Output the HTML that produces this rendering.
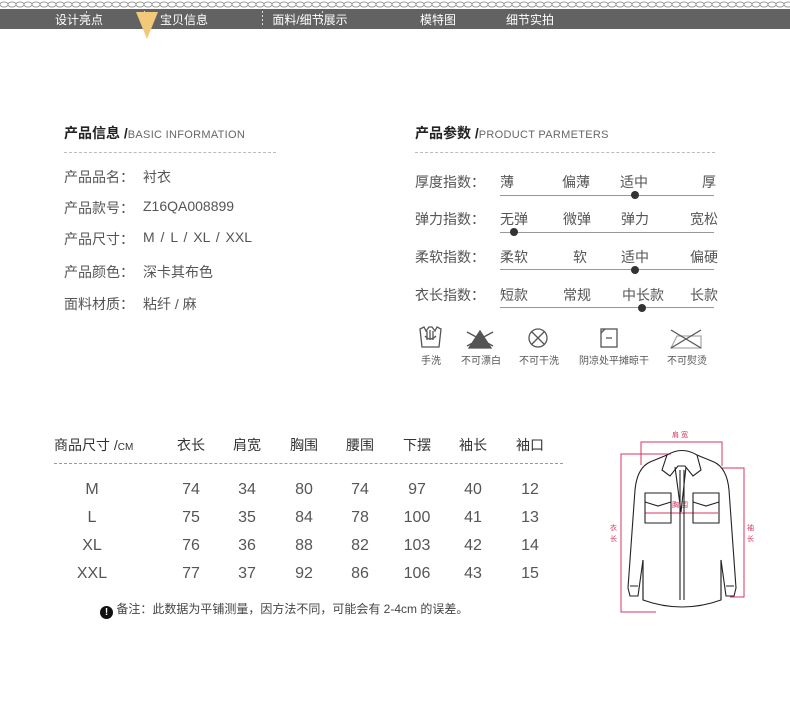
<!DOCTYPE html>
<html><head><meta charset="utf-8"><style>
*{margin:0;padding:0;box-sizing:border-box}
body{width:790px;height:709px;background:#fff;position:relative;overflow:hidden;font-family:"Liberation Sans","Noto Sans CJK SC",sans-serif;color:#555}
.a{position:absolute;white-space:nowrap}
.nav{position:absolute;left:0;top:9px;width:790px;height:20px;background:#626262}
.nav span{position:absolute;top:2px;font-size:12px;color:#fff;transform:translateX(-50%)}
.sep{position:absolute;top:11px;width:1px;height:16px;background:repeating-linear-gradient(#ddd 0 2px,transparent 2px 4px)}
.t{font-size:14px;font-weight:bold;color:#222}
.t small{font-weight:normal;font-size:11px;color:#666;letter-spacing:.3px}
.dash{position:absolute;height:0;border-top:1px dashed #bbb}
.r{font-size:14px;color:#555}
.ln{position:absolute;height:1px;background:#999}
.dot{position:absolute;width:8px;height:8px;border-radius:50%;background:#333}
.c{position:absolute;transform:translateX(-50%);white-space:nowrap}
.ic{font-size:10px;color:#555}
.th{font-size:14px;color:#333}
.td{font-size:16px;color:#555}
</style></head><body>
<svg class="a" style="left:0;top:0" width="790" height="9"><defs><pattern id="ch" width="8" height="9" patternUnits="userSpaceOnUse"><ellipse cx="4" cy="4.5" rx="4" ry="2.5" fill="none" stroke="#999" stroke-width="1"/></pattern></defs><rect width="790" height="9" fill="url(#ch)"/></svg>
<div class="nav">
<span style="left:79px">设计亮点</span>
<span style="left:184px">宝贝信息</span>
<span style="left:310px">面料/细节展示</span>
<span style="left:438px">模特图</span>
<span style="left:530px">细节实拍</span>
</div>
<div class="sep" style="left:86px"></div><div class="sep" style="left:144px"></div><div class="sep" style="left:262px"></div><div class="sep" style="left:322px"></div>
<svg class="a" style="left:136px;top:12px" width="22" height="28"><polygon points="0,0 22,0 11,27" fill="#f2c87a"/></svg>

<div class="a t" style="left:64px;top:123px">产品信息 /<small>BASIC INFORMATION</small></div>
<div class="dash" style="left:64px;top:152px;width:212px"></div>
<div class="a r" style="left:64px;top:167px">产品品名：</div><div class="a r" style="left:143px;top:167px">衬衣</div>
<div class="a r" style="left:64px;top:198px">产品款号：</div><div class="a r" style="left:143px;top:198px">Z16QA008899</div>
<div class="a r" style="left:64px;top:229px">产品尺寸：</div><div class="a r" style="left:143px;top:229px;word-spacing:2px">M / L / XL / XXL</div>
<div class="a r" style="left:64px;top:262px">产品颜色：</div><div class="a r" style="left:143px;top:262px">深卡其布色</div>
<div class="a r" style="left:64px;top:294px">面料材质：</div><div class="a r" style="left:143px;top:294px">粘纤 / 麻</div>

<div class="a t" style="left:415px;top:123px">产品参数 /<small>PRODUCT PARMETERS</small></div>
<div class="dash" style="left:415px;top:152px;width:300px"></div>

<div class="a r" style="left:415px;top:172px">厚度指数：</div>
<div class="a r" style="left:500px;top:172px">薄</div><div class="a r" style="left:562px;top:172px">偏薄</div><div class="a r" style="left:620px;top:172px">适中</div><div class="a r" style="left:702px;top:172px">厚</div>
<div class="ln" style="left:500px;top:195px;width:214px"></div><div class="dot" style="left:631px;top:191px"></div>

<div class="a r" style="left:415px;top:209px">弹力指数：</div>
<div class="a r" style="left:500px;top:209px">无弹</div><div class="a r" style="left:563px;top:209px">微弹</div><div class="a r" style="left:621px;top:209px">弹力</div><div class="a r" style="left:690px;top:209px">宽松</div>
<div class="ln" style="left:500px;top:232px;width:214px"></div><div class="dot" style="left:510px;top:228px"></div>

<div class="a r" style="left:415px;top:247px">柔软指数：</div>
<div class="a r" style="left:500px;top:247px">柔软</div><div class="a r" style="left:573px;top:247px">软</div><div class="a r" style="left:621px;top:247px">适中</div><div class="a r" style="left:690px;top:247px">偏硬</div>
<div class="ln" style="left:500px;top:269px;width:214px"></div><div class="dot" style="left:631px;top:266px"></div>

<div class="a r" style="left:415px;top:285px">衣长指数：</div>
<div class="a r" style="left:500px;top:285px">短款</div><div class="a r" style="left:563px;top:285px">常规</div><div class="a r" style="left:622px;top:285px">中长款</div><div class="a r" style="left:690px;top:285px">长款</div>
<div class="ln" style="left:500px;top:307px;width:214px"></div><div class="dot" style="left:638px;top:304px"></div>

<svg class="a" style="left:405px;top:322px" width="320" height="30" fill="none" stroke="#555" stroke-width="1.3">
<path d="M15 7 L19 5 L21 9 L24 5 L27 5 L30 9 L32 5 L36 7 L34 25 L17 25 Z"/><path d="M22 9 L22 18 M25 8 L25 18 M28 9 L28 18 M20 14 Q25 20 31 14"/>
<path d="M64 26 L75 9 L86 26 Z" fill="#555"/><path d="M62 10 L88 24 M62 24 L88 10"/>
<circle cx="133" cy="16" r="9"/><path d="M127 10 L139 22 M139 10 L127 22"/>
<rect x="196" y="7" width="16" height="18"/><path d="M196 11 L200 7 M201 16 L207 16"/>
<path d="M266 26 L272 14 L296 14 L296 26 Z" stroke="#aaa"/><path d="M266 8 L296 26 M266 26 L296 8"/>
</svg>
<div class="c ic" style="left:431px;top:352px">手洗</div>
<div class="c ic" style="left:481px;top:352px">不可漂白</div>
<div class="c ic" style="left:539px;top:352px">不可干洗</div>
<div class="c ic" style="left:614px;top:352px">阴凉处平摊晾干</div>
<div class="c ic" style="left:687px;top:352px">不可熨烫</div>

<div class="a th" style="left:54px;top:435px">商品尺寸 /<span style="font-size:10px">CM</span></div>
<div class="c th" style="left:191px;top:435px">衣长</div><div class="c th" style="left:247px;top:435px">肩宽</div><div class="c th" style="left:304px;top:435px">胸围</div><div class="c th" style="left:360px;top:435px">腰围</div><div class="c th" style="left:417px;top:435px">下摆</div><div class="c th" style="left:473px;top:435px">袖长</div><div class="c th" style="left:530px;top:435px">袖口</div>
<div class="dash" style="left:54px;top:463px;width:509px;border-color:#999"></div>

<div class="td">
<div class="c" style="left:92px;top:481px">M</div><div class="c" style="left:191px;top:481px">74</div><div class="c" style="left:247px;top:481px">34</div><div class="c" style="left:304px;top:481px">80</div><div class="c" style="left:360px;top:481px">74</div><div class="c" style="left:417px;top:481px">97</div><div class="c" style="left:473px;top:481px">40</div><div class="c" style="left:530px;top:481px">12</div>
<div class="c" style="left:92px;top:509px">L</div><div class="c" style="left:191px;top:509px">75</div><div class="c" style="left:247px;top:509px">35</div><div class="c" style="left:304px;top:509px">84</div><div class="c" style="left:360px;top:509px">78</div><div class="c" style="left:417px;top:509px">100</div><div class="c" style="left:473px;top:509px">41</div><div class="c" style="left:530px;top:509px">13</div>
<div class="c" style="left:92px;top:537px">XL</div><div class="c" style="left:191px;top:537px">76</div><div class="c" style="left:247px;top:537px">36</div><div class="c" style="left:304px;top:537px">88</div><div class="c" style="left:360px;top:537px">82</div><div class="c" style="left:417px;top:537px">103</div><div class="c" style="left:473px;top:537px">42</div><div class="c" style="left:530px;top:537px">14</div>
<div class="c" style="left:92px;top:565px">XXL</div><div class="c" style="left:191px;top:565px">77</div><div class="c" style="left:247px;top:565px">37</div><div class="c" style="left:304px;top:565px">92</div><div class="c" style="left:360px;top:565px">86</div><div class="c" style="left:417px;top:565px">106</div><div class="c" style="left:473px;top:565px">43</div><div class="c" style="left:530px;top:565px">15</div>
</div>
<div class="a" style="left:100px;top:600px;font-size:12px;color:#444"><span style="display:inline-block;width:13px;height:13px;border-radius:50%;background:#111;color:#fff;font-size:10px;text-align:center;line-height:13px;font-weight:bold;vertical-align:-2px">!</span> 备注：此数据为平铺测量，因方法不同，可能会有 2-4cm 的误差。</div>

<svg class="a" style="left:590px;top:410px" width="190" height="210" fill="none">
<g stroke="#d8345f" stroke-width="1">
<path d="M51 55 V32 H132 V56"/><path d="M81 44 H31 V202 H66"/><path d="M132 58 H154 V187 H140"/>
<path d="M55 103 H128"/>
</g>
<g fill="#d8345f" font-size="7" font-family="Liberation Sans,Noto Sans CJK SC,sans-serif">
<text x="82" y="27">肩 宽</text><text x="20" y="120">衣</text><text x="20" y="131">长</text><text x="157" y="120">袖</text><text x="157" y="131">长</text><text x="82" y="97">胸 围</text>
</g>
<g stroke="#222" stroke-width="1.1">
<path d="M77 45 Q92 36 107 45 L124 52 Q137 58 139 80 L146 178 L144 186 L136 186 L131 150 L131 190 Q92 204 53 190 L53 150 L48 186 L40 186 L38 178 L45 80 Q47 58 60 52 Z"/>
<path d="M77 45 L72 60 L80 66 L88 56 L95 56 L103 66 L111 60 L107 45"/>
<path d="M85 57 L91 102 L96 57 M90 60 V190 M94 60 V190"/>
<path d="M55 83 H81 V113 H55 Z M55 92 L68 96 L81 92"/>
<path d="M103 83 H129 V113 H103 Z M103 92 L116 96 L129 92"/>
<path d="M40 176 H48 M136 176 H144 M53 150 V190 M131 150 V190"/>
</g>
</svg>
</body></html>
